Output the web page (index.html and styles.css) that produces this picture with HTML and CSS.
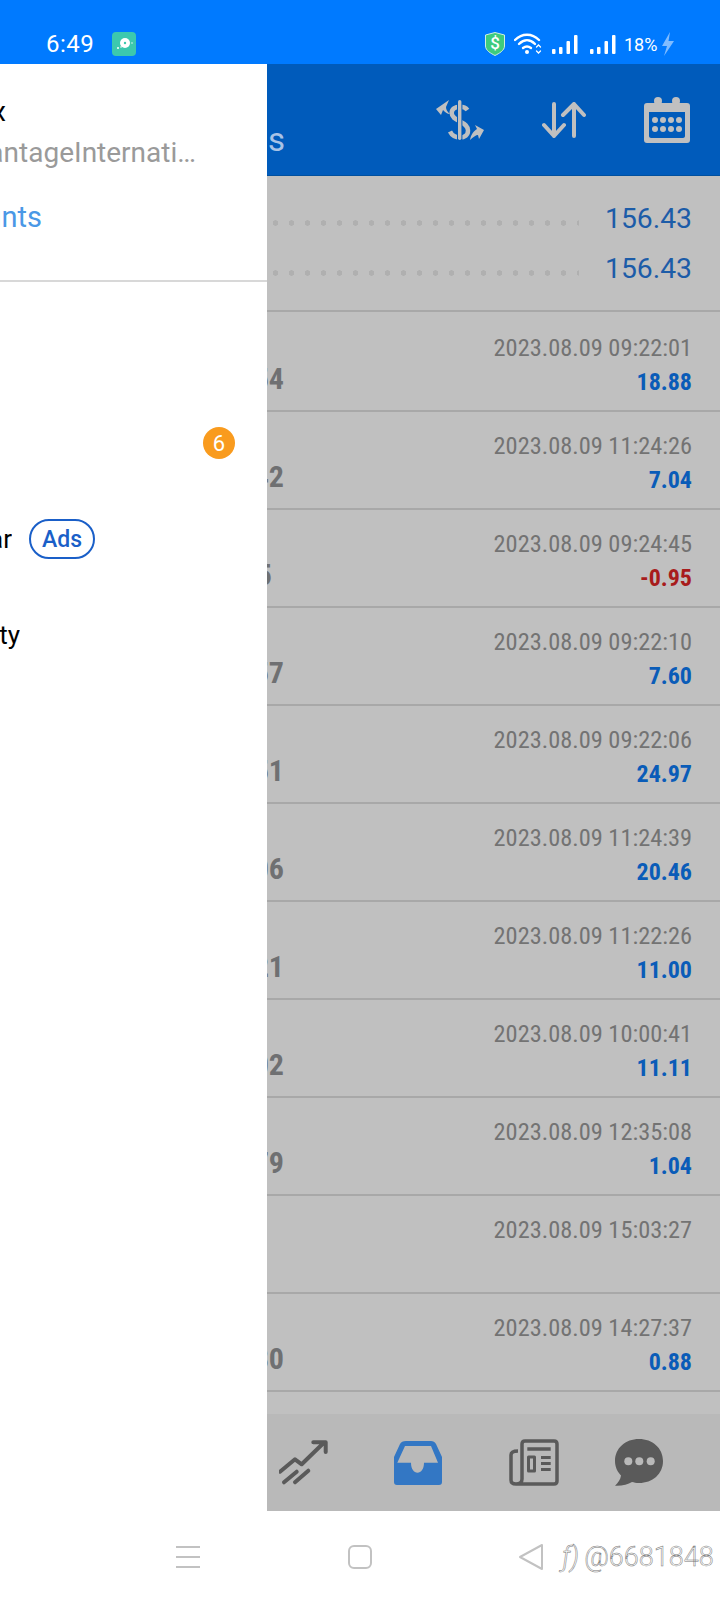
FILE: index.html
```html
<!DOCTYPE html>
<html lang="en">
<head>
    <meta charset="UTF-8">
    <meta name="viewport" content="width=device-width, initial-scale=1.0">
    <title>History</title>
    <link rel="stylesheet" href="styles.css">
</head>
<body>
    <div class="status-bar">
        <span class="clock">6:49</span>
        <span class="app-badge">
            <svg width="24" height="24" viewBox="0 0 24 24"><circle cx="13" cy="11" r="5" fill="#fff"/><circle cx="13" cy="11" r="1.2" fill="#3cc8ae"/><circle cx="6" cy="16" r="1" fill="#fff"/><circle cx="9" cy="15" r="0.8" fill="#fff"/><circle cx="20" cy="11" r="0.7" fill="#fff"/></svg>
        </span>
        <span class="status-right">
            <svg width="20" height="24" viewBox="0 0 20 24"><path d="M10 0.500L19.500 3V14C19.500 18.500 14 21.500 10 23.500C6 21.500 0.500 18.500 0.500 14V3Z" fill="#3ecb7e" stroke="#cfeee0" stroke-width="1"/><text x="10" y="17" text-anchor="middle" class="shield-text">$</text></svg>
            <svg width="28" height="22" viewBox="0 0 28 22" fill="none" stroke="#fff" stroke-linecap="round"><path d="M1 7C8 0 18 0 25 7" stroke-width="2.400"/><path d="M5 11C10 6 16 6 21 11" stroke-width="2.400"/><path d="M9 15C11.500 13 14.500 13 17 15" stroke-width="2.400"/><circle cx="13" cy="19" r="2" fill="#fff" stroke="none"/><path d="M22.500 14l2-2 2 2M22.500 18l2 2 2-2" stroke-width="1.300"/></svg>
            <svg class="signal" width="26" height="19" viewBox="0 0 26 19" fill="#fff"><rect x="0" y="14" width="3.500" height="5" rx="1"/><rect x="7" y="12" width="3.500" height="7" rx="1"/><rect x="14.500" y="6" width="3.500" height="13" rx="1"/><rect x="22" y="0" width="3.500" height="19" rx="1"/></svg>
            <svg class="signal" width="26" height="19" viewBox="0 0 26 19" fill="#fff"><rect x="0" y="14" width="3.500" height="5" rx="1"/><rect x="7" y="12" width="3.500" height="7" rx="1"/><rect x="14.500" y="6" width="3.500" height="13" rx="1"/><rect x="22" y="0" width="3.500" height="19" rx="1"/></svg>
            <span class="battery">18%</span>
            <svg width="13" height="24" viewBox="0 0 13 24" fill="#80bcff"><path d="M9 0L1 14H6L3 24L13 9H7.500Z"/></svg>
        </span>
    </div>

    <div class="main">
        <aside class="drawer">
            <div class="drawer-head">
                <div class="clip clip-name"><span>Alex</span></div>
                <div class="clip clip-server"><span>VantageInternati…</span></div>
                <div class="clip clip-accounts"><span>Manage accounts</span></div>
            </div>
            <ul class="drawer-menu">
                <li></li>
                <li class="menu-mail"><span class="badge">6</span></li>
                <li><div class="clip clip-calendar"><span>Economic Calendar</span></div><span class="ads">Ads</span></li>
                <li><div class="clip clip-community"><span>Traders Community</span></div></li>
            </ul>
        </aside>

        <section class="content">
            <header class="app-bar">
                <div class="clip clip-title"><span>Positions</span></div>
                <div class="app-actions">
                    <svg width="48" height="40" viewBox="0 0 48 40" fill="#c0c0c0">
                        <path d="M31.500 10C30 8 27 6.700 24 6.700C19 6.700 15.700 9 15.700 13C15.700 17 19 19 24 21.500C29 24 32 26 32 30.500C32 35 28.500 37.500 24 37.500C20 37.500 16 35.500 14 31.500" fill="none" stroke="#c0c0c0" stroke-width="4.500"/>
                        <rect x="21" y="0" width="5.400" height="40" fill="#005bbb"/>
                        <rect x="22" y="0" width="3.400" height="40" rx="1.700"/>
                        <path d="M0 9L13 0L10 7C10 9 11 12 14 14C11 14 9 12 7 10L5 15Z"/>
                        <path d="M48 30L39 25L41 29C38 31 35 34 34 40C37 37 40 35 42 35L43 39Z"/>
                    </svg>
                    <svg width="44" height="36" viewBox="0 0 44 36" fill="none" stroke="#c0c0c0" stroke-width="4" stroke-linecap="round" stroke-linejoin="round"><path d="M12 2V34M2 23L12 34L22 23"/><path d="M32 34V2M21 13L32 2L42 13"/></svg>
                    <svg width="46" height="46" viewBox="0 0 46 46" fill="#c0c0c0"><path d="M3 6H43C45 6 46 7 46 9V43C46 45 45 46 43 46H3C1 46 0 45 0 43V9C0 7 1 6 3 6ZM5 15V39C5 40 6 41 7 41H39C40 41 41 40 41 39V15Z" fill-rule="evenodd"/><circle cx="14" cy="4" r="4"/><circle cx="32" cy="4" r="4"/><circle cx="11" cy="23" r="3"/><circle cx="19" cy="23" r="3"/><circle cx="27" cy="23" r="3"/><circle cx="35" cy="23" r="3"/><circle cx="11" cy="32" r="3"/><circle cx="19" cy="32" r="3"/><circle cx="27" cy="32" r="3"/><circle cx="35" cy="32" r="3"/></svg>
                </div>
            </header>

            <div class="summary">
                <div class="summary-line"><span class="dots"></span><span class="summary-val">156.43</span></div>
                <div class="summary-line"><span class="dots"></span><span class="summary-val">156.43</span></div>
            </div>

            <div class="deals">
                <div class="deal deal-first">
                    <div class="clip clip-num"><span>1.54</span></div>
                    <div class="deal-right"><div class="deal-date">2023.08.09 09:22:01</div><div class="deal-val">18.88</div></div>
                </div>
                <div class="deal">
                    <div class="clip clip-num"><span>1.42</span></div>
                    <div class="deal-right"><div class="deal-date">2023.08.09 11:24:26</div><div class="deal-val">7.04</div></div>
                </div>
                <div class="deal">
                    <div class="clip clip-num clip-short"><span>1.5</span></div>
                    <div class="deal-right"><div class="deal-date">2023.08.09 09:24:45</div><div class="deal-val loss">-0.95</div></div>
                </div>
                <div class="deal">
                    <div class="clip clip-num"><span>1.57</span></div>
                    <div class="deal-right"><div class="deal-date">2023.08.09 09:22:10</div><div class="deal-val">7.60</div></div>
                </div>
                <div class="deal">
                    <div class="clip clip-num"><span>1.51</span></div>
                    <div class="deal-right"><div class="deal-date">2023.08.09 09:22:06</div><div class="deal-val">24.97</div></div>
                </div>
                <div class="deal">
                    <div class="clip clip-num"><span>1.06</span></div>
                    <div class="deal-right"><div class="deal-date">2023.08.09 11:24:39</div><div class="deal-val">20.46</div></div>
                </div>
                <div class="deal">
                    <div class="clip clip-num"><span>1.21</span></div>
                    <div class="deal-right"><div class="deal-date">2023.08.09 11:22:26</div><div class="deal-val">11.00</div></div>
                </div>
                <div class="deal">
                    <div class="clip clip-num"><span>1.02</span></div>
                    <div class="deal-right"><div class="deal-date">2023.08.09 10:00:41</div><div class="deal-val">11.11</div></div>
                </div>
                <div class="deal">
                    <div class="clip clip-num"><span>1.79</span></div>
                    <div class="deal-right"><div class="deal-date">2023.08.09 12:35:08</div><div class="deal-val">1.04</div></div>
                </div>
                <div class="deal">
                    <div class="deal-right"><div class="deal-date">2023.08.09 15:03:27</div><div class="deal-val">&nbsp;</div></div>
                </div>
                <div class="deal">
                    <div class="clip clip-num"><span>1.80</span></div>
                    <div class="deal-right"><div class="deal-date">2023.08.09 14:27:37</div><div class="deal-val">0.88</div></div>
                </div>
            </div>

            <nav class="tabs">
                <svg width="50" height="46" viewBox="0 0 50 46" fill="none" stroke="#5a5a5a" stroke-width="4" stroke-linecap="round" stroke-linejoin="round"><path d="M1 31.700L16 19.300L22.700 24.300L44.300 3.300M34.300 2.300H46.700V12"/><path d="M5 42.300L17.700 31.700M16 42.300L29.300 30.700"/></svg>
                <svg width="48" height="44" viewBox="0 0 48 44" fill="#3377c4"><path d="M12 0H37C39 0 41 1 42 3L48 16V41C48 43 47 44 45 44H3C1 44 0 43 0 41V16L6 3C7 1 9 0 12 0ZM11 5L3.300 21.700H17C17 28 20 31.700 23.500 31.700C27 31.700 30 28 30 21.700H44L37 5Z" fill-rule="evenodd"/></svg>
                <svg class="tab-news" width="50" height="47" viewBox="0 0 50 47" fill="none" stroke="#5a5a5a" stroke-width="3.500" stroke-linejoin="round"><path d="M9 12C4 12 2 13 2 16V41C2 44 4 45 7 45H45C47 45 48 44 48 42V5C48 3 47 2 45 2H16C14 2 13 3 13 5V40C13 43 11 45 7 45"/><path d="M18.300 10H41.700"/><rect x="19.500" y="18" width="6" height="14" stroke-width="3"/><path d="M32 18.500H41.700M32 24.500H41.700M32 30.500H41.700" stroke-width="3"/></svg>
                <svg class="tab-chat" width="48" height="47" viewBox="0 0 48 47" fill="#5a5a5a"><path d="M24 0C37.500 0 48 9 48 22C48 35 37.500 44 24 44C21 44 19 43.500 17 43C13 45.500 7 47 0 46.700C3 44 5.500 40.500 6 36.500C2.500 33 0 28 0 22C0 9 10.500 0 24 0Z"/><circle cx="13.300" cy="22.300" r="4" fill="#b9b9b9"/><circle cx="24.300" cy="22.300" r="4" fill="#b9b9b9"/><circle cx="35.700" cy="22.300" r="4" fill="#b9b9b9"/></svg>
            </nav>
        </section>
    </div>

    <div class="nav-bar">
        <svg class="nav-menu" width="24" height="22" viewBox="0 0 24 22" fill="#c2c2c2"><rect y="0" width="24" height="2"/><rect y="10" width="24" height="2"/><rect y="20" width="24" height="2"/></svg>
        <svg class="nav-home" width="24" height="24" viewBox="0 0 24 24" fill="none" stroke="#c2c2c2" stroke-width="2"><rect x="1" y="1" width="22" height="22" rx="5"/></svg>
        <svg class="nav-back" width="26" height="28" viewBox="0 0 26 28" fill="none" stroke="#c2c2c2" stroke-width="2" stroke-linejoin="round"><path d="M24 2V26L2 14Z"/></svg>
        <span class="watermark"><i>ƒ)</i>@6681848</span>
    </div>
</body>
</html>
```

FILE: styles.css
```css
* {
    box-sizing: border-box;
}
html, body {
    margin: 0;
    padding: 0;
}
body {
    width: 720px;
    height: 1600px;
    overflow: hidden;
    font-family: Roboto, "Liberation Sans", sans-serif;
    background: #fff;
    display: flex;
    flex-direction: column;
}

/* status bar */
.status-bar {
    height: 64px;
    background: #007aff;
    color: #fff;
    display: flex;
    align-items: center;
    padding: 24px 46px 0 46px;
}
.clock {
    font-size: 24px;
    letter-spacing: 0.5px;
}
.app-badge {
    width: 24px;
    height: 24px;
    margin-left: 18px;
    background: #3cc8ae;
    border-radius: 4px;
    display: block;
}
.app-badge svg {
    display: block;
}
.status-right {
    margin-left: auto;
    display: flex;
    align-items: center;
}
.shield-text {
    font-size: 17px;
    font-weight: 500;
    fill: #fff;
    font-family: Roboto, sans-serif;
}
.status-right svg:nth-child(2) {
    margin-left: 9px;
}
.signal {
    margin-left: 10px;
}
.signal + .signal {
    margin-left: 12px;
}
.battery {
    font-size: 18px;
    margin-left: 8px;
    width: 37px;
}

/* layout */
.main {
    height: 1447px;
    display: flex;
}
.drawer {
    width: 267px;
    flex: none;
    background: #fff;
}
.content {
    flex: 1;
    min-width: 0;
    background: #c0c0c0;
    display: flex;
    flex-direction: column;
}

/* text cut off by the drawer or the screen edge */
.clip {
    display: flex;
    justify-content: flex-end;
    overflow: hidden;
    white-space: nowrap;
    flex: none;
}

/* drawer */
.drawer-head {
    height: 218px;
    border-bottom: 2px solid #d8d8d8;
    padding-top: 30px;
}
.clip-name {
    width: 6px;
    font-size: 27px;
    line-height: 36px;
    color: #000;
}
.clip-server {
    width: 196px;
    padding-left: 2px;
    font-size: 28px;
    line-height: 36px;
    margin-top: 5px;
    color: #9a9a9a;
}
.clip-accounts {
    width: 42px;
    font-size: 29px;
    line-height: 40px;
    margin-top: 26px;
    color: #4a98e6;
}
.drawer-menu {
    list-style: none;
    margin: 0;
    padding: 17px 0 0;
}
.drawer-menu li {
    height: 96px;
    display: flex;
    align-items: center;
    color: #000;
    font-size: 26px;
}
.menu-mail {
    justify-content: flex-end;
    padding-right: 32px;
}
.badge {
    width: 32px;
    height: 32px;
    border-radius: 50%;
    background: #f99b1e;
    color: #fff;
    font-size: 22px;
    display: flex;
    align-items: center;
    justify-content: center;
}
.clip-calendar {
    width: 12px;
}
.clip-community {
    width: 20px;
}
.ads {
    margin-left: 17px;
    width: 66px;
    height: 40px;
    border: 2px solid #1a5fc8;
    border-radius: 20px;
    color: #1a5fc8;
    font-size: 23px;
    font-weight: 500;
    display: flex;
    align-items: center;
    justify-content: center;
}

/* app bar */
.app-bar {
    height: 112px;
    flex: none;
    background: #005bbb;
    border-bottom: 1px solid #00509f;
    display: flex;
    align-items: center;
    padding-right: 30px;
}
.clip-title {
    width: 19px;
    margin-top: 40px;
    font-size: 33px;
    letter-spacing: 1px;
    color: #a9c3e6;
}
.app-actions {
    margin-left: auto;
    display: flex;
    align-items: center;
    gap: 58px;
}
.app-actions svg {
    display: block;
}

/* summary */
.summary {
    height: 136px;
    flex: none;
    padding-top: 17px;
    border-bottom: 2px solid #a8a8a8;
}
.summary-line {
    height: 50px;
    display: flex;
    align-items: center;
    padding: 0 28px 0 6px;
}
.dots {
    width: 306px;
    height: 6px;
    margin-top: 10px;
    background: radial-gradient(circle at 2.500px 3px, #b0b0b0 2.500px, transparent 3px) 0 0 / 16px 6px repeat-x;
}
.summary-val {
    margin-left: auto;
    font-size: 28.300px;
    color: #1c5ca8;
}

/* deals */
.deals {
    flex: 1;
    min-height: 0;
}
.deal {
    height: 98px;
    border-bottom: 2px solid #a8a8a8;
    display: flex;
    align-items: flex-end;
    padding: 0 28px 13px 0;
}
.deal-first {
    height: 100px;
}
.clip-num {
    width: 17px;
    font-size: 30px;
    line-height: 36px;
    font-weight: 700;
    font-stretch: 75%;
    color: #6f7072;
}
.clip-short {
    width: 5px;
}
.deal-right {
    margin-left: auto;
    text-align: right;
}
.deal-date {
    font-size: 24.400px;
    line-height: 30px;
    font-stretch: 75%;
    color: #737373;
    margin-bottom: 4px;
}
.deal-val {
    font-size: 24px;
    line-height: 30px;
    font-weight: 700;
    font-stretch: 75%;
    color: #0a5cb8;
}
.deal-val.loss {
    color: #a81c1c;
}

/* bottom tabs */
.tabs {
    height: 97px;
    flex: none;
    background: #b9b9b9;
    display: flex;
    align-items: center;
    gap: 65px;
    padding: 0 0 0 12px;
}
.tabs svg {
    display: block;
    flex: none;
}
.tabs .tab-news {
    margin-left: 2px;
}
.tabs .tab-chat {
    margin-left: -9px;
}

/* system nav */
.nav-bar {
    flex: 1;
    background: #fff;
    display: flex;
    align-items: center;
    padding-left: 176px;
    padding-top: 2px;
}
.nav-home {
    margin-left: 148px;
}
.nav-back {
    margin-left: 146px;
}
.watermark {
    margin-left: 18px;
    font-size: 27px;
    font-weight: 300;
    color: #fff;
    -webkit-text-stroke: 0.5px #777;
    white-space: nowrap;
}
.watermark i {
    margin-right: 5px;
}
```
